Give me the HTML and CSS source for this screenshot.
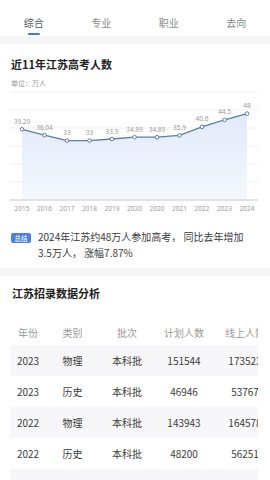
FILE: index.html
```html
<!DOCTYPE html>
<html lang="zh">
<head>
<meta charset="utf-8">
<link rel="stylesheet" href="styles.css">
</head>
<body>
<div class="tabs">
  <div class="tab active"><span>综合</span><i class="bar"></i></div>
  <div class="tab"><span>专业</span></div>
  <div class="tab"><span>职业</span></div>
  <div class="tab"><span>去向</span></div>
</div>
<div class="sep"></div>
<section class="chart-sec">
  <h2 class="title">近11年江苏高考人数</h2>
  <div class="unit">单位：万人</div>
</section>
<svg class="chart" width="270" height="126" viewBox="0 88 270 126">
  <defs>
    <linearGradient id="fill" x1="0" y1="0" x2="0" y2="1">
      <stop offset="0" stop-color="#e1eafa"/>
      <stop offset="1" stop-color="#f5f8fd"/>
    </linearGradient>
  </defs>
  <g stroke="#ededed" stroke-width="0.8">
    <line x1="10" y1="92" x2="258" y2="92"/>
    <line x1="10" y1="110" x2="258" y2="110"/>
    <line x1="10" y1="128" x2="258" y2="128"/>
    <line x1="10" y1="146" x2="258" y2="146"/>
    <line x1="10" y1="164" x2="258" y2="164"/>
    <line x1="10" y1="182" x2="258" y2="182"/>
  </g>
  <polygon fill="url(#fill)" points="22,200 22,129.3 44.5,135.1 67,140.6 89.5,140.6 112,139 134.5,137.2 157,137.2 179.5,135.4 202,126.9 224.5,119.9 247,113.6 247,200"/>
  <line x1="10" y1="200" x2="258" y2="200" stroke="#c8c8c8" stroke-width="1"/>
  <polyline fill="none" stroke="#5b7ea8" stroke-width="1.3" points="22,129.3 44.5,135.1 67,140.6 89.5,140.6 112,139 134.5,137.2 157,137.2 179.5,135.4 202,126.9 224.5,119.9 247,113.6"/>
  <g fill="#fff" stroke="#5b7ea8" stroke-width="1">
    <circle cx="22" cy="129.3" r="1.8"/>
    <circle cx="44.5" cy="135.1" r="1.8"/>
    <circle cx="67" cy="140.6" r="1.8"/>
    <circle cx="89.5" cy="140.6" r="1.8"/>
    <circle cx="112" cy="139" r="1.8"/>
    <circle cx="134.5" cy="137.2" r="1.8"/>
    <circle cx="157" cy="137.2" r="1.8"/>
    <circle cx="179.5" cy="135.4" r="1.8"/>
    <circle cx="202" cy="126.9" r="1.8"/>
    <circle cx="224.5" cy="119.9" r="1.8"/>
    <circle cx="247" cy="113.6" r="1.8"/>
  </g>
  <g class="vlab" text-anchor="middle">
    <text x="22" y="123.8">39.29</text>
    <text x="44.5" y="129.6">36.04</text>
    <text x="67" y="135.1">33</text>
    <text x="89.5" y="135.1">33</text>
    <text x="112" y="133.5">33.9</text>
    <text x="134.5" y="131.7">34.89</text>
    <text x="157" y="131.7">34.89</text>
    <text x="179.5" y="129.9">35.9</text>
    <text x="202" y="121.4">40.6</text>
    <text x="224.5" y="114.4">44.5</text>
    <text x="247" y="108.1">48</text>
  </g>
  <g class="xlab" text-anchor="middle">
    <text x="22" y="210.5">2015</text>
    <text x="44.5" y="210.5">2016</text>
    <text x="67" y="210.5">2017</text>
    <text x="89.5" y="210.5">2018</text>
    <text x="112" y="210.5">2019</text>
    <text x="134.5" y="210.5">2020</text>
    <text x="157" y="210.5">2020</text>
    <text x="179.5" y="210.5">2021</text>
    <text x="202" y="210.5">2022</text>
    <text x="224.5" y="210.5">2023</text>
    <text x="247" y="210.5">2024</text>
  </g>
</svg>
<div class="summary">
  <span class="badge">总结</span>
  <p class="sum-text">2024年江苏约48万人参加高考， 同比去年增加<br>3.5万人， 涨幅7.87%</p>
</div>
<div class="sep"></div>
<section class="table-sec">
  <h2 class="title">江苏招录数据分析</h2>
  <div class="table-wrap">
    <table class="data">
      <colgroup>
        <col class="c1"><col class="c2"><col class="c3"><col class="c4"><col class="c5">
      </colgroup>
      <thead>
        <tr><th>年份</th><th>类别</th><th>批次</th><th>计划人数</th><th>线上人数</th></tr>
      </thead>
      <tbody>
        <tr class="alt"><td>2023</td><td>物理</td><td>本科批</td><td>151544</td><td>173523</td></tr>
        <tr><td>2023</td><td>历史</td><td>本科批</td><td>46946</td><td>53767</td></tr>
        <tr class="alt"><td>2022</td><td>物理</td><td>本科批</td><td>143943</td><td>164578</td></tr>
        <tr><td>2022</td><td>历史</td><td>本科批</td><td>48200</td><td>56251</td></tr>
        <tr class="alt"><td>2021</td><td>物理</td><td>本科批</td><td>133346</td><td>150950</td></tr>
      </tbody>
    </table>
  </div>
</section>
</body>
</html>
```
FILE: styles.css
```css
* { box-sizing: border-box; }
html, body { margin: 0; padding: 0; }
body {
  width: 270px;
  height: 480px;
  overflow: hidden;
  background: #fff;
  font-family: "Noto Sans CJK SC", "Noto Sans", sans-serif;
  color: #333;
}
.tabs {
  height: 36px;
  display: grid;
  grid-template-columns: repeat(4, 1fr);
}
.tab {
  display: flex;
  flex-direction: column;
  align-items: center;
  padding-top: 16px;
  font-size: 10px;
  line-height: 14px;
  color: #8a8a8a;
}
.tab.active { color: #555; }
.tab .bar {
  display: block;
  width: 12px;
  height: 2px;
  margin-top: 3px;
  border-radius: 1px;
  background: #3b78d8;
}
.sep {
  height: 8px;
  background: #f5f5f7;
}
.chart-sec { padding: 12px 11px 0; }
.title {
  margin: 0;
  font-size: 11px;
  line-height: 16px;
  font-weight: 700;
  color: #222;
}
.unit {
  margin-top: 6px;
  font-size: 7px;
  line-height: 10px;
  color: #999;
}
.chart { display: block; }
.vlab text, .xlab text {
  font-family: "Noto Sans", "Liberation Sans", sans-serif;
  font-size: 6.5px;
  fill: #9a9a9a;
}
.summary {
  display: flex;
  align-items: flex-start;
  gap: 7px;
  padding: 15px 10px 7px 11px;
}
.badge {
  flex: none;
  margin-top: 4px;
  width: 20px;
  height: 10px;
  border-radius: 2px;
  background: #4a80e0;
  color: #fff;
  font-size: 6.5px;
  line-height: 10px;
  text-align: center;
}
.sum-text {
  margin: 0;
  font-size: 10px;
  line-height: 16px;
  color: #3a3a3a;
}
.table-sec { padding: 9px 12px 0 10px; }
.table-sec .title { padding-left: 2px; }
.table-wrap {
  margin-top: 19px;
  width: 248px;
  overflow: hidden;
}
.data {
  border-collapse: collapse;
  table-layout: fixed;
  width: 267px;
  font-size: 10px;
}
.c1 { width: 36px; }
.c2 { width: 53px; }
.c3 { width: 56px; }
.c4 { width: 58px; }
.c5 { width: 64px; }
.data th, .data td {
  padding: 0;
  text-align: center;
  white-space: nowrap;
  overflow: hidden;
}
.data th {
  height: 25px;
  font-weight: 400;
  color: #9a9a9a;
  vertical-align: middle;
}
.data td {
  height: 31px;
  color: #3a3a3a;
}
.data tr.alt td { background: #f7f7f9; }
```
